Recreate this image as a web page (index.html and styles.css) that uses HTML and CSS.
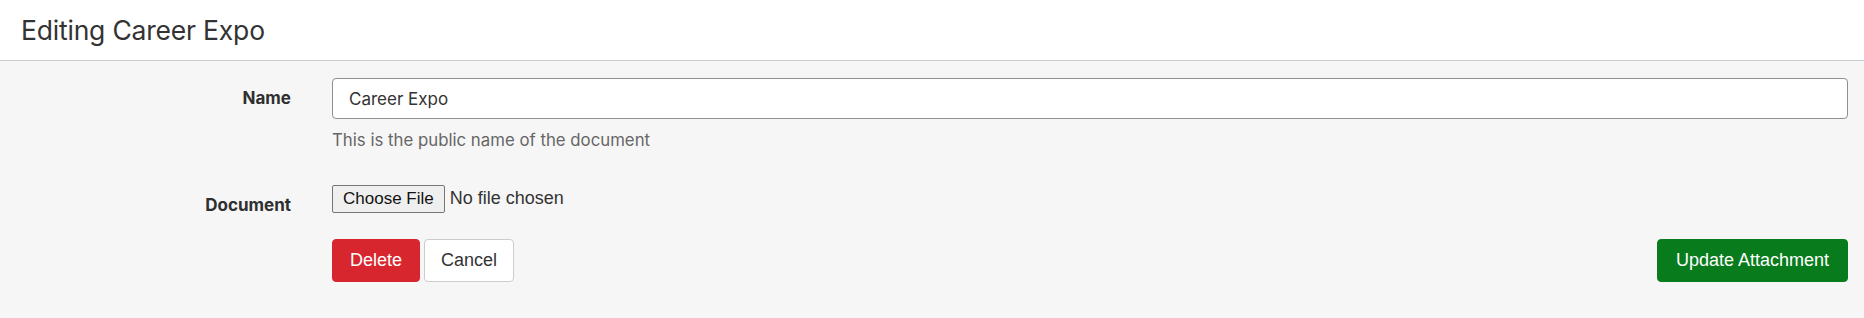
FILE: index.html
```html
<!DOCTYPE html>
<html lang="en">
<head>
<meta charset="utf-8">
<title>Editing Career Expo</title>
<link rel="stylesheet" href="styles.css">
</head>
<body>
  <header class="page-header">
    <h1 class="page-title">Editing Career Expo</h1>
  </header>
  <main class="page-body">
    <form class="edit-form">
      <div class="form-row">
        <label class="form-label" for="name">Name</label>
        <div class="form-field">
          <input class="text-input" id="name" type="text" value="Career Expo">
          <p class="help-text">This is the public name of the document</p>
        </div>
      </div>
      <div class="form-row form-row--file">
        <label class="form-label" for="document">Document</label>
        <div class="form-field">
          <input class="file-input" id="document" type="file">
        </div>
      </div>
      <div class="form-row form-row--actions">
        <div class="form-label"></div>
        <div class="actions">
          <div class="actions-left">
            <button type="button" class="btn btn--danger">Delete</button>
            <button type="button" class="btn btn--default">Cancel</button>
          </div>
          <button type="submit" class="btn btn--primary">Update Attachment</button>
        </div>
      </div>
    </form>
  </main>
</body>
</html>
```

FILE: styles.css
```css
* { box-sizing: border-box; }

html, body {
  margin: 0;
  padding: 0;
}

body {
  font-family: "Inter", "Liberation Sans", sans-serif;
  color: #333333;
  background: #f6f6f6;
  min-height: 318px;
}

.page-header {
  background: #ffffff;
  height: 61px;
  border-bottom: 1px solid #c9cdd2;
  display: flex;
  align-items: center;
  padding: 0 21px;
}

.page-title {
  margin: 0;
  font-size: 26.5px;
  font-weight: 400;
  color: #333333;
  letter-spacing: -0.2px;
}

.page-body {
  padding: 17px 16px 36px 0;
}

.form-row {
  display: grid;
  grid-template-columns: 291px 1fr;
  column-gap: 41px;
}

.form-label {
  font-size: 17px;
  font-weight: 700;
  text-align: right;
  line-height: 41px;
  color: #2f2f2f;
}

.text-input {
  display: block;
  width: 100%;
  height: 41px;
  border: 1px solid #8f8f8f;
  border-radius: 4px;
  background: #ffffff;
  padding: 0 16px;
  font-family: "Inter", "Liberation Sans", sans-serif;
  font-size: 17px;
  color: #333333;
}

.help-text {
  margin: 9px 0 0;
  font-size: 16.8px;
  line-height: 24px;
  color: #666666;
}

.form-row--file {
  margin-top: 33px;
}

.file-input {
  font-family: "Liberation Sans", Arial, sans-serif;
  font-size: 18px;
  color: #333333;
  margin: 0;
}

.file-input::file-selector-button {
  font-family: "Liberation Sans", Arial, sans-serif;
  font-size: 17px;
  color: #111111;
  background: #efefef;
  border: 1px solid #767676;
  border-radius: 2px;
  padding: 3px 10px;
  margin-right: 5px;
}

.form-row--actions {
  margin-top: 13px;
}

.actions {
  display: flex;
  justify-content: space-between;
  align-items: center;
}

.actions-left {
  display: flex;
  gap: 4px;
}

.btn {
  height: 43px;
  padding: 0 17px;
  border: 1px solid transparent;
  border-radius: 4px;
  font-family: "Liberation Sans", Arial, sans-serif;
  font-size: 18px;
  cursor: pointer;
}

.btn--danger {
  background: #d7262e;
  border-color: #d7262e;
  color: #ffffff;
}

.btn--default {
  background: #ffffff;
  border-color: #cccccc;
  color: #333333;
  padding: 0 16px;
}

.btn--primary {
  background: #087c1c;
  border-color: #087c1c;
  color: #ffffff;
  padding: 0 18px;
}
```
